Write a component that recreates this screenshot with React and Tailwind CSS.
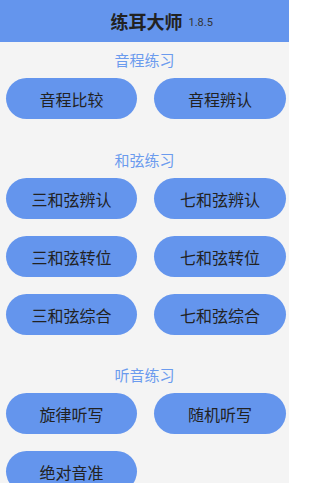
const sections = [
    { title: '音程练习', items: ['音程比较', '音程辨认'], gap: 'pt-[9px]' },
    { title: '和弦练习', items: ['三和弦辨认', '七和弦辨认', '三和弦转位', '七和弦转位', '三和弦综合', '七和弦综合'], gap: 'pt-[32px]' },
    { title: '听音练习', items: ['旋律听写', '随机听写', '绝对音准'], gap: 'pt-[31px]' },
];

function Section({ title, items, gap }) {
    return (
        <div className={gap}>
            <p className="text-center text-[15px] leading-[18px] text-[#6b9bee]">{title}</p>
            <div className="grid grid-cols-[131px_132px] gap-x-[17px] gap-y-[17px] pl-[6px] pt-[9px]">
                {items.map((name) => (
                    <button
                        key={name}
                        className="h-[41px] rounded-full bg-[#6495ed] text-[16px] text-[#222]"
                    >
                        {name}
                    </button>
                ))}
            </div>
        </div>
    );
}

export default function App() {
    return (
        <div
            className="w-[299px] h-[483px] overflow-hidden bg-white"
            style={{ fontFamily: '"Noto Sans CJK SC", "Noto Sans", sans-serif' }}
        >
            <div className="w-[289px] h-full bg-[#f4f4f4]">
                <header className="h-[42px] bg-[#6495ed] grid grid-cols-[1fr_auto_1fr] items-center">
                    <span />
                    <span className="text-[18px] font-bold text-[#222] pl-[4px]">练耳大师</span>
                    <span className="text-[11px] text-[#333] pl-[6px] pt-[5px] font-['Roboto',sans-serif]">1.8.5</span>
                </header>
                {sections.map((s) => (
                    <Section key={s.title} {...s} />
                ))}
            </div>
        </div>
    );
}
